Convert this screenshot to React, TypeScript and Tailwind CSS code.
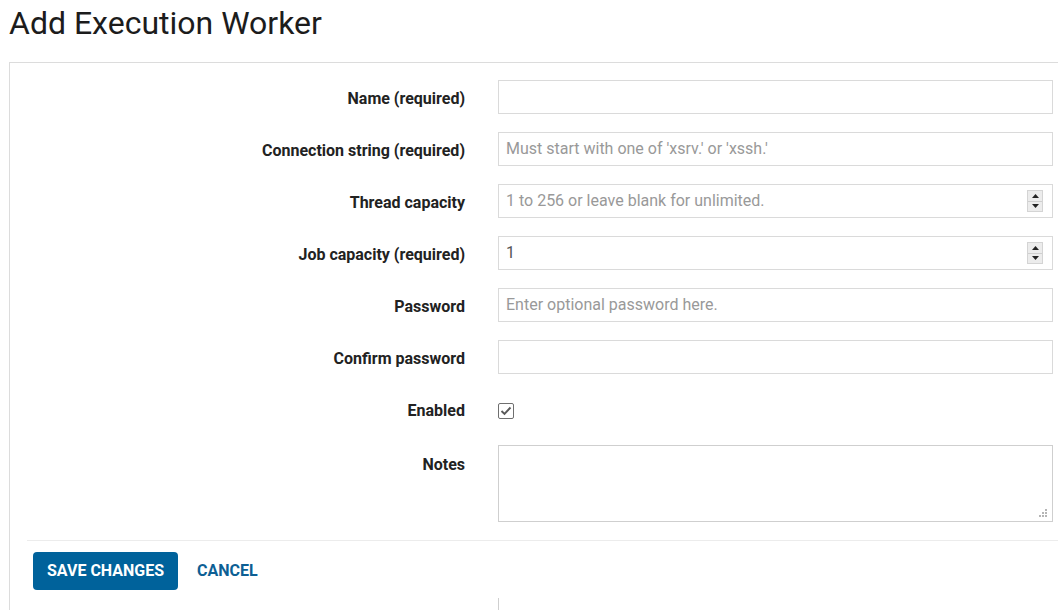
import React from "react";

const Spinner = () => (
  <div className="absolute right-[9px] top-1/2 -translate-y-1/2 flex h-[22px] w-[16px] flex-col border border-[#d4d4d4] bg-[#ececec]">
    <div className="flex flex-1 items-center justify-center border-b border-[#cfcfcf]">
      <svg width="7" height="4" viewBox="0 0 7 4"><path d="M0 4 L3.5 0 L7 4 Z" fill="#222" /></svg>
    </div>
    <div className="flex flex-1 items-center justify-center">
      <svg width="7" height="4" viewBox="0 0 7 4"><path d="M0 0 L3.5 4 L7 0 Z" fill="#222" /></svg>
    </div>
  </div>
);

function Row({ label, children, top }: { label: string; children: React.ReactNode; top?: boolean }) {
  return (
    <div className={`flex ${top ? "items-start" : "items-center"}`}>
      <div
        className={`w-[455px] shrink-0 text-right text-[16px] font-bold text-[#222] ${top ? "pt-[9px]" : "pt-[3px]"}`}
      >
        {label}
      </div>
      <div className="ml-[33px] mr-[5px] flex-1">{children}</div>
    </div>
  );
}

function Input({ placeholder, value, spinner }: { placeholder?: string; value?: string; spinner?: boolean }) {
  return (
    <div className="relative h-[34px] border border-[#dadada] bg-white">
      <div className="flex h-full items-center px-[7px] text-[16px]">
        {value ? (
          <span className="text-[#555]">{value}</span>
        ) : (
          <span className="text-[#999]">{placeholder}</span>
        )}
      </div>
      {spinner && <Spinner />}
    </div>
  );
}

export default function App() {
  return (
    <div className="min-h-[610px] w-[1058px] overflow-hidden bg-white" style={{ fontFamily: "Roboto, 'Liberation Sans', sans-serif" }}>
      <h1 className="pl-[9px] pt-[1px] text-[32px] font-normal leading-[45px] text-[#1c1c1c]">Add Execution Worker</h1>
      <div className="ml-[9px] mt-[16px] border-l border-t border-[#dcdcdc] pt-[17px]">
        <div className="flex flex-col gap-[18px]">
          <Row label="Name (required)">
            <Input />
          </Row>
          <Row label="Connection string (required)">
            <Input placeholder="Must start with one of 'xsrv.' or 'xssh.'" />
          </Row>
          <Row label="Thread capacity">
            <Input placeholder="1 to 256 or leave blank for unlimited." spinner />
          </Row>
          <Row label="Job capacity (required)">
            <Input value="1" spinner />
          </Row>
          <Row label="Password">
            <Input placeholder="Enter optional password here." />
          </Row>
          <Row label="Confirm password">
            <Input />
          </Row>
          <Row label="Enabled">
            <div className="flex h-[34px] items-center pt-[4px]">
              <div className="flex h-[16px] w-[16px] items-center justify-center rounded-[2px] border border-[#6f6f6f] bg-white">
                <svg width="12" height="10" viewBox="0 0 12 10">
                  <path d="M1.5 5 L4.5 8 L10.5 1.5" fill="none" stroke="#5a5a5a" strokeWidth="1.9" />
                </svg>
              </div>
            </div>
          </Row>
          <Row label="Notes" top>
            <div className="relative mt-px h-[77px] border border-[#cfcfcf] bg-white">
              <svg className="absolute bottom-[3px] right-[4px]" width="10" height="10" viewBox="0 0 10 10">
                <rect x="7" y="1" width="2" height="2" fill="#b5b5b5" />
                <rect x="4" y="4" width="2" height="2" fill="#b5b5b5" />
                <rect x="7" y="4" width="2" height="2" fill="#b5b5b5" />
                <rect x="1" y="7" width="2" height="2" fill="#b5b5b5" />
                <rect x="4" y="7" width="2" height="2" fill="#b5b5b5" />
                <rect x="7" y="7" width="2" height="2" fill="#b5b5b5" />
              </svg>
            </div>
          </Row>
        </div>
        <div className="ml-[17px] mt-[18px] border-t border-[#ececec] pt-[11px]">
          <div className="flex items-center gap-[19px] pl-[6px]">
            <button className="h-[38px] rounded-[4px] bg-[#00629b] px-[14px] text-[16px] font-bold text-white">SAVE CHANGES</button>
            <button className="text-[16px] font-bold text-[#0d5f94]">CANCEL</button>
          </div>
          <div className="ml-[471px] mt-[8px] h-[14px] border-l border-[#cfcfcf]" />
        </div>
      </div>
    </div>
  );
}
